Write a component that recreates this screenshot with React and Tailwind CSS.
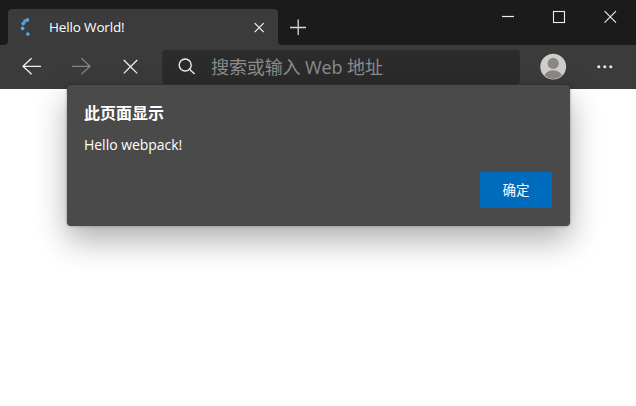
const sans = "font-['Open_Sans','Noto_Sans_CJK_SC',sans-serif]";
const spinnerDots = [[27.4, 19.9], [25, 21], [23.2, 23.6], [22.6, 28.3], [27.8, 34]];

function Spinner() {
  return (
    <svg className="h-9 w-[41px] shrink-0" viewBox="8 9 41 36" fill="#55a5df">
      {spinnerDots.map(([x, y]) => (
        <circle key={x} cx={x} cy={y} r="1.85" />
      ))}
    </svg>
  );
}

function TitleBar() {
  return (
    <div className="flex h-[45px] flex-col">
      <div className="h-[9px] bg-[#1b1b1b]" />
      <div className="flex h-9">
        <div className="w-2 rounded-br-[4px] bg-[#1b1b1b]" />
        <div className="w-[270px] bg-[linear-gradient(#1b1b1b_50%,#3b3b3b_50%)]">
          <div className="flex h-9 items-center rounded-t-[4px] bg-[#3b3b3b]">
            <Spinner />
            <span className="flex-1 whitespace-nowrap text-[13.5px] tracking-[-0.15px] text-white">Hello World!</span>
            <svg className="mr-[13px] h-3 w-3" viewBox="0 0 12 12" stroke="#f4f4f4" strokeWidth="1.2">
              <path d="M1.7 2.2 10.7 11.2M10.7 2.2 1.7 11.2" />
            </svg>
          </div>
        </div>
        <div className="flex-1 rounded-bl-[4px] bg-[#1b1b1b]">
          <svg className="-mt-[9px] h-[45px] w-[358px]" viewBox="278 0 358 45" fill="none" stroke="#efefef" strokeWidth="1">
            <path d="M290 27.5H306M298.2 19.5V35" stroke="#d8d8d8" strokeWidth="1.3" />
            <path d="M502 16.5H514" strokeWidth="1.2" />
            <rect x="553.5" y="11.5" width="11" height="11" strokeWidth="1.1" />
            <path d="M604.6 11.2 616 22.6M616 11.2 604.6 22.6" strokeWidth="1.1" />
          </svg>
        </div>
      </div>
    </div>
  );
}

function Toolbar() {
  return (
    <div className="flex h-11 bg-[#3b3b3b]">
      <svg className="h-11 w-[162px] shrink-0" viewBox="0 45 162 44" fill="none" strokeWidth="1.3">
        <path d="M41 66.3H23M31.6 58.3 23 66.3 31.6 74.3" stroke="#f0f0f0" />
        <path d="M72 66.3H90M81.4 58.3 90 66.3 81.4 74.3" stroke="#828282" />
        <path d="M123.8 60 137.2 73.4M137.2 60 123.8 73.4" stroke="#f0f0f0" />
      </svg>
      <div className="mt-[5px] flex h-[34px] w-[358px] items-center rounded-[4px] bg-[#2b2b2b]">
        <svg className="h-[34px] w-[49px] shrink-0" viewBox="162 50 49 34" fill="none" stroke="#ededed" strokeWidth="1.4">
          <circle cx="185.2" cy="65" r="6" />
          <path d="M189.5 69.2 194.6 74" />
        </svg>
        <span className="-mt-px whitespace-nowrap text-[18px] leading-[34px] tracking-[-0.1px] text-[#8c8c8c]">搜索或输入 Web 地址</span>
      </div>
      <svg className="h-11 w-[116px] shrink-0" viewBox="520 45 116 44">
        <defs>
          <clipPath id="avatar">
            <circle cx="553.2" cy="66.7" r="12.2" />
          </clipPath>
        </defs>
        <circle cx="553.2" cy="66.7" r="12.9" fill="#d0cecb" />
        <g fill="#8a8784" clipPath="url(#avatar)">
          <circle cx="553.2" cy="63.4" r="5.6" />
          <ellipse cx="553.2" cy="77.7" rx="9.2" ry="7.4" />
        </g>
        <g fill="#ededed">
          <circle cx="598.8" cy="66.7" r="1.5" />
          <circle cx="604.8" cy="66.7" r="1.5" />
          <circle cx="610.8" cy="66.7" r="1.5" />
        </g>
      </svg>
    </div>
  );
}

function AlertDialog() {
  return (
    <div className="absolute left-[67px] top-[85px] flex h-[141px] w-[503px] flex-col rounded-[4px] bg-[#4a4a4a] pl-[17px] pr-[18px] pt-[17px] text-white shadow-[0_14px_32px_rgba(0,0,0,0.32),0_0_3px_rgba(0,0,0,0.35)]">
      <h1 className="h-[22px] text-[16px] font-bold leading-[22px]">此页面显示</h1>
      <p className="mt-[11px] h-5 text-[14px] leading-5 tracking-[-0.03px]">Hello webpack!</p>
      <button className="mt-[17px] h-9 w-[72px] self-end rounded-[2px] bg-[#006cbe] text-[13.5px] leading-9">确定</button>
    </div>
  );
}

export default function App() {
  return (
    <div className={`relative h-[406px] w-[636px] overflow-hidden bg-white ${sans}`}>
      <header className="bg-[#3b3b3b]">
        <TitleBar />
        <Toolbar />
      </header>
      <AlertDialog />
    </div>
  );
}
